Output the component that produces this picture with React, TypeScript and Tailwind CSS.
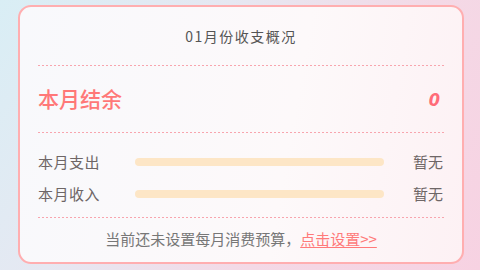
import React from "react";

const Dots = () => (
  <div className="h-px w-full bg-[linear-gradient(to_right,#f8a5ae_2px,transparent_2px)] bg-[length:4px_1px]" />
);

const rows = [
  { name: "本月支出", value: "暂无" },
  { name: "本月收入", value: "暂无" },
];

export default function App() {
  return (
    <div
      className="w-[480px] h-[270px] bg-[linear-gradient(125deg,#d9eef5_0%,#e6e8f2_35%,#f4d9e6_65%,#f7d2e2_100%)] pt-[5px] pl-[18px]"
      style={{ fontFamily: '"Noto Sans CJK SC", "Noto Sans", sans-serif' }}
    >
      <div className="w-[446px] h-[259px] rounded-[13px] border-2 border-[#ffaeb0] bg-[linear-gradient(100deg,#f8f9fc_0%,#fdf9fa_60%,#fdf1f4_100%)] px-[18px] flex flex-col">
        <div className="h-[58px] flex items-center justify-center text-[14px] text-[#555] tracking-[1.5px] pt-[1px]">
          01月份收支概况
        </div>
        <Dots />
        <div className="h-[66px] flex items-center justify-between">
          <span className="text-[21px] text-[#ff7878] font-medium">本月结余</span>
          <span
            className="text-[18px] text-[#ff6b78] font-semibold italic pr-[4px]"
            style={{ fontFamily: '"DejaVu Sans Condensed", "DejaVu Sans", sans-serif' }}
          >
            0
          </span>
        </div>
        <Dots />
        <div className="flex flex-col pt-[19px] gap-[12px] pb-[13px]">
          {rows.map((r) => (
            <div key={r.name} className="flex items-center h-[20px]">
              <span className="w-[97px] text-[15px] tracking-[0.5px] text-[#6e6666]">{r.name}</span>
              <div className="w-[249px] h-[8px] rounded-full bg-[#fde6c6]" />
              <span className="ml-auto mr-[1px] text-[15px] text-[#6e6666]">{r.value}</span>
            </div>
          ))}
        </div>
        <Dots />
        <div className="flex-1 flex items-center justify-center text-[15px] text-[#777] pb-[2px]">
          <span>当前还未设置每月消费预算，</span>
          <span className="text-[#ff7a7a] underline underline-offset-2">点击设置&gt;&gt;</span>
        </div>
      </div>
    </div>
  );
}
